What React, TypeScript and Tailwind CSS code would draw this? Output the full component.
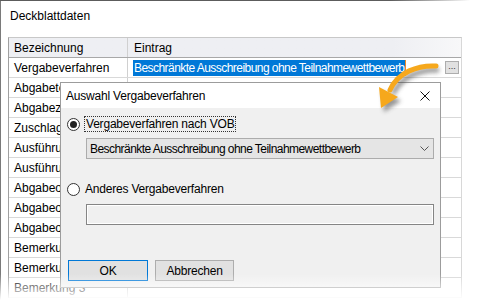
import React from 'react';

const rows = [
  'Abgabetermin',
  'Abgabezeit',
  'Zuschlagsfrist',
  'Ausführungsbeginn',
  'Ausführungsende',
  'Abgabeort Straße',
  'Abgabeort PLZ',
  'Abgabeort Ort',
  'Bemerkung 1',
  'Bemerkung 2',
  'Bemerkung 3',
];

const Radio = ({ checked }: { checked?: boolean }) => (
  <span className="flex h-[13px] w-[13px] items-center justify-center rounded-full border border-[#333] bg-white">
    {checked && <span className="h-[7px] w-[7px] rounded-full bg-[#222]" />}
  </span>
);

const App = () => {
  return (
    <div className="relative h-[300px] w-[500px] overflow-hidden bg-white font-['Liberation_Sans',Arial,sans-serif] text-[12px] leading-none text-black">
      {/* Fensterrahmen oben */}
      <div className="h-px bg-linear-to-r from-[#5c5c5c] from-[78%] to-white to-[94%]" />
      <div className="flex h-[299px]">
        <div className="w-px bg-[#7a7a7a]" />
        <div className="flex flex-1 flex-col">
          <div className="h-[36px] pl-[9px] pt-[9px]">Deckblattdaten</div>

          {/* Tabelle */}
          <div className="ml-[7px] w-[454px] border-l border-r border-t border-l-[#a0a0a0] border-r-[#d8d8d8] border-t-[#c8c8c8]">
            <div className="flex h-[20px] border-b border-[#a8a8a8] bg-linear-to-r from-[#eeeff3] from-[85%] to-[#f8f8f9]">
              <div className="flex w-[119px] items-center border-r border-[#d0d0d0] pl-[5px]">Bezeichnung</div>
              <div className="flex items-center pl-[6px]">Eintrag</div>
            </div>
            <div className="flex h-[20px] border-b border-[#d9d9d9]">
              <div className="flex w-[119px] items-center border-r border-[#d0d0d0] pl-[5px]">Vergabeverfahren</div>
              <div className="flex flex-1 items-center pl-[5px]">
                <span className="flex h-[16px] items-center bg-[#0078d7] px-px tracking-[-0.55px] text-white">
                  Beschränkte Ausschreibung ohne Teilnahmewettbewerb
                </span>
                <span className="h-[16px] w-px bg-[#f08a24]" />
                <span className="ml-auto mr-[2px] flex h-[13px] w-[14px] items-end justify-center border border-[#adadad] bg-[#e1e1e1] pb-[2px] text-[9px] leading-none text-[#333]">
                  ...
                </span>
              </div>
            </div>
            {rows.map((r) => (
              <div key={r} className="flex h-[20px] border-b border-[#d9d9d9]">
                <div className="flex w-[119px] items-center overflow-hidden whitespace-nowrap border-r border-[#d0d0d0] pl-[5px]">{r}</div>
                <div className="flex-1" />
              </div>
            ))}
          </div>
        </div>
      </div>

      {/* Dialog */}
      <div className="absolute left-[60px] top-[82px] flex h-[206px] w-[381px] flex-col border border-[#9c9c9c] bg-[#f0f0f0] tracking-[-0.2px]">
        <div className="flex h-[25px] items-center justify-between bg-white pl-[5px] pr-[10px]">
          <span>Auswahl Vergabeverfahren</span>
          <svg width="10" height="10" viewBox="0 0 10 10">
            <path d="M0.5 0.5 L9.5 9.5 M9.5 0.5 L0.5 9.5" stroke="#111" strokeWidth="1" />
          </svg>
        </div>
        <div className="flex flex-col pl-[6px] pt-[8px]">
          <div className="flex h-[16px] items-center">
            <Radio checked />
            <span className="ml-[4px] flex h-[16px] items-center border border-dotted border-[#333] px-px">
              Vergabeverfahren nach VOB
            </span>
          </div>
          <div className="ml-[19px] mt-[6px] flex h-[21px] w-[348px] items-center justify-between border border-[#acacac] bg-[#e5e5e5] pl-[3px] pr-[4px]">
            <span className="tracking-[-0.55px]">Beschränkte Ausschreibung ohne Teilnahmewettbewerb</span>
            <svg width="9" height="5" viewBox="0 0 9 5">
              <path d="M0.5 0.5 L4.5 4.5 L8.5 0.5" fill="none" stroke="#555" strokeWidth="1" />
            </svg>
          </div>
          <div className="mt-[22px] flex h-[16px] items-center">
            <Radio />
            <span className="ml-[5px]">Anderes Vergabeverfahren</span>
          </div>
          <div className="ml-[19px] mt-[7px] h-[21px] w-[348px] border border-[#858585] bg-[#f0f0f0] shadow-[inset_0_0_0_1px_#fff]" />
          <div className="mt-[35px] flex gap-[7px] pl-px">
            <div className="flex h-[21px] w-[80px] items-center justify-center border border-[#0078d7] bg-[#e1e1e1]">OK</div>
            <div className="flex h-[21px] w-[79px] items-center justify-center border border-[#adadad] bg-[#e1e1e1]">Abbrechen</div>
          </div>
        </div>
      </div>

      {/* Pfeil */}
      <svg className="pointer-events-none absolute left-0 top-0" width="500" height="300" viewBox="0 0 500 300">
        <defs>
          <filter id="sh" x="-20%" y="-20%" width="140%" height="140%">
            <feGaussianBlur stdDeviation="2" />
          </filter>
        </defs>
        <g transform="translate(3 4)" opacity="0.55" filter="url(#sh)">
          <path d="M436 66 C418 65 398 72 390 90" fill="none" stroke="#444" strokeWidth="5" />
          <polygon points="381,108 379,87 398,97" fill="#444" />
        </g>
        <path d="M436 66 C418 65 398 72 390 90" fill="none" stroke="#f6a81c" strokeWidth="5" strokeLinecap="round" />
        <polygon points="381,108 379,87 398,97" fill="#f6a81c" />
      </svg>

      {/* Ausblenden unten */}
      <div className="pointer-events-none absolute bottom-0 left-0 h-[26px] w-full bg-linear-to-b from-white/0 to-white" />
    </div>
  );
};

export default App;
